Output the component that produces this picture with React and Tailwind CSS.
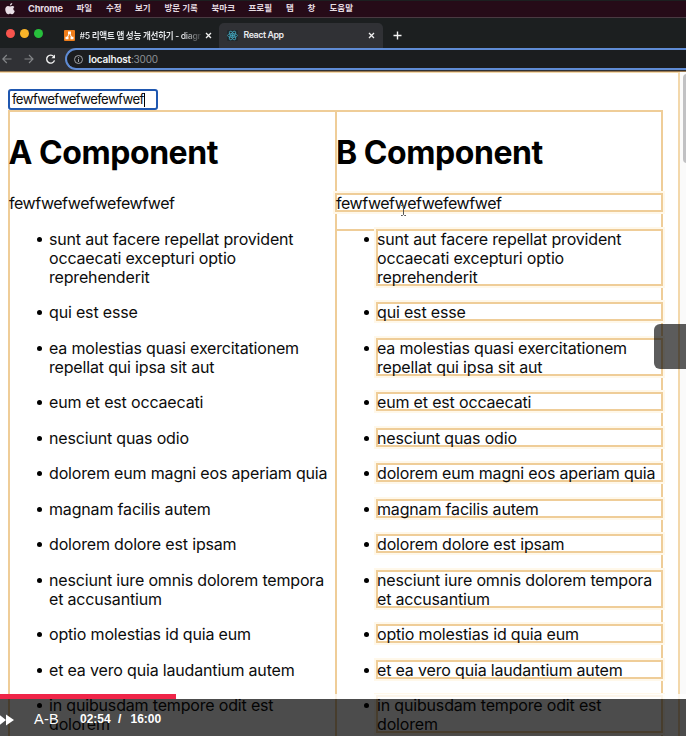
import React from "react";

const posts = [
  ["sunt aut facere repellat provident", "occaecati excepturi optio", "reprehenderit"],
  ["qui est esse"],
  ["ea molestias quasi exercitationem", "repellat qui ipsa sit aut"],
  ["eum et est occaecati"],
  ["nesciunt quas odio"],
  ["dolorem eum magni eos aperiam quia"],
  ["magnam facilis autem"],
  ["dolorem dolore est ipsam"],
  ["nesciunt iure omnis dolorem tempora", "et accusantium"],
  ["optio molestias id quia eum"],
  ["et ea vero quia laudantium autem"],
  ["in quibusdam tempore odit est", "dolorem"],
];

const menus = [
  ["파일", "w-[29.5px]"],
  ["수정", "w-[29px]"],
  ["보기", "w-[29.5px]"],
  ["방문 기록", "w-[47px]"],
  ["북마크", "w-[37px]"],
  ["프로필", "w-[37.5px]"],
  ["탭", "w-[21.5px]"],
  ["창", "w-[22px]"],
  ["도움말", "w-[30px]"],
];

function Apple() {
  return (
    <svg className="h-[12px] w-[10px]" viewBox="0 0 20 24" fill="#e9dfe6">
      <path d="M14.5 0c.2 2.600-2 5-4.500 5C9.700 2.600 12 .3 14.500 0zM18.700 8.200c-3.200 2-2.700 6.500.8 8-.9 3-3 6.300-5.200 6.500-1.600 0-2.200-1-4-1s-2.600 1-4 1C3.300 22.700.5 17 .5 12.700.5 8.500 3.200 6 6 6c1.700 0 3 1.100 4.300 1.100S13 5.900 15 6c1.400 0 2.900.8 3.700 2.200z" />
    </svg>
  );
}

function Close() {
  return (
    <svg className="size-[7px]" viewBox="0 0 7 7" stroke="#f1f1f1" strokeWidth="1.3">
      <path d="M1 1l5 5M6 1L1 6" />
    </svg>
  );
}

function DiagramLogo() {
  return (
    <svg className="size-[11px] shrink-0" viewBox="0 0 11 11">
      <rect width="11" height="11" rx="1" fill="#ef7d1a" />
      <path d="M5.500 3L3 8M5.500 3L8 8" stroke="#fff" />
      <path d="M4 1.500h3v2.500H4zM1.500 6.800h3v2.500h-3zM6.500 6.800h3v2.500h-3z" fill="#fff" />
    </svg>
  );
}

function ReactLogo() {
  return (
    <svg className="size-[11px]" viewBox="0 0 24 24" fill="none" stroke="#43a8c0" strokeWidth="1.600">
      <rect width="24" height="24" rx="3" fill="#20282d" stroke="none" />
      <ellipse cx="12" cy="12" rx="11" ry="4.300" />
      <ellipse cx="12" cy="12" rx="11" ry="4.300" transform="rotate(60 12 12)" />
      <ellipse cx="12" cy="12" rx="11" ry="4.300" transform="rotate(120 12 12)" />
      <circle cx="12" cy="12" r="2" fill="#43a8c0" />
    </svg>
  );
}

function Column({ name, boxed }) {
  const box = boxed ? "shadow-[inset_0_0_0_2px_#efcd98,0_0_0_2px_#fff8ea]" : "";
  return (
    <section
      className={
        "h-[700px] shrink-0 border-t-2 border-l-2 border-[#efcd98] " +
        (boxed ? "w-[328px] border-r-2" : "w-[327px]")
      }
    >
      <h1
        className={
          "mt-[21px] h-[39px] text-[32px] leading-[39px] font-bold tracking-[-0.45px] whitespace-nowrap text-black " +
          (boxed ? "-ml-px" : "-ml-[1.5px]")
        }
      >
        {name} Component
      </h1>
      <p
        className={
          "mt-[21px] -ml-[2px] h-[19px] pl-px leading-[20px] tracking-[-0.46px] " +
          (boxed ? "-mr-[2px] " : "") +
          box
        }
      >
        fewfwefwefwefewfwef
      </p>
      <ul
        className={
          "mt-[16.500px] -ml-[2px] flex flex-col gap-[16.500px] pl-[41px] " +
          (boxed ? "-mr-[2px] shadow-[inset_0_2px_0_#efcd98]" : "")
        }
      >
        {posts.map((lines) => (
          <li
            key={lines[0]}
            className={"relative tracking-[-0.17px] whitespace-nowrap " + (boxed ? "pl-px " : "") + box}
          >
            <span className="absolute top-[8px] -left-[12px] size-[5px] rounded-full bg-black" />
            {lines.map((line) => (
              <span key={line} className="block h-[19px] leading-[20px]">
                {line}
              </span>
            ))}
          </li>
        ))}
      </ul>
    </section>
  );
}

export default function App() {
  return (
    <div className="relative flex h-[736px] w-[686px] flex-col overflow-hidden bg-white font-['Inter','Noto_Sans_CJK_KR',sans-serif] text-[16px] text-[#0c0c0c]">
      <header className="shrink-0 bg-[#1c1f20]">
        <div className="mt-px flex h-[17px] items-center border-b border-[#4a3a42] bg-[#260b18] pb-px pl-[5px] text-[8.500px] text-[#e5dbe1]">
          <Apple />
          <span className="ml-[13px] w-[48.500px] text-[9.200px] font-bold tracking-[-0.1px]">Chrome</span>
          {menus.map(([label, width]) => (
            <span key={label} className={"shrink-0 font-bold whitespace-nowrap " + width}>
              {label}
            </span>
          ))}
        </div>
        <div className="flex h-[30px] items-end text-[8.800px] text-[#e8eaed]">
          <div className="flex h-[25px] w-[219px] items-center pb-px pl-[6px]">
            <div className="-mt-[3px] flex gap-[5.500px]">
              <span className="size-[8.500px] rounded-full bg-[#f8544d]" />
              <span className="size-[8.500px] rounded-full bg-[#f9b429]" />
              <span className="size-[8.500px] rounded-full bg-[#27bf3c]" />
            </div>
            <div className="mt-[2px] ml-[21px] flex items-center">
              <DiagramLogo />
              <span className="ml-[5px] w-[121px] bg-linear-to-r from-[#e8eaed] from-85% to-[#3b3d3e] bg-clip-text text-[8.600px] font-semibold tracking-[-0.3px] whitespace-nowrap text-transparent">
                #5 리액트 앱 성능 개선하기 - diagr
              </span>
              <span className="ml-[4px]">
                <Close />
              </span>
            </div>
          </div>
          <div className="flex h-[25px] w-[164px] items-center rounded-t-[5px] bg-[#303135] pb-px pl-[8px]">
            <ReactLogo />
            <span className="ml-[5.500px] w-[124.500px] font-semibold tracking-[-0.4px]">React App</span>
            <Close />
          </div>
          <svg className="mb-[8px] ml-[10px] size-[9px]" viewBox="0 0 9 9" stroke="#f3f3f3" strokeWidth="1.400">
            <path d="M4.500 .5v8M.5 4.500h8" />
          </svg>
        </div>
        <div className="flex h-[24px] items-start border-b border-[#9a7950] bg-[#303135]">
          <svg className="h-[22px] w-[65px] shrink-0" viewBox="0 0 65 22" fill="none" stroke="#85878a" strokeWidth="1.100">
            <path d="M11.500 11H3M6.800 7L2.800 11l4 4M24.500 11H33M29 7l4 4-4 4" />
            <path d="M53.800 8.600a4 4 0 1 0 .7 3.800" stroke="#f1f1f1" strokeWidth="1.400" />
            <path d="M55 6.600v3.600h-3.600z" fill="#f1f1f1" stroke="none" />
          </svg>
          <div className="flex h-[22px] flex-1 items-center rounded-l-full border-2 border-r-0 border-[#5f8bd4] bg-[#1b1d1f] pt-px pl-[6.500px] text-[10px] tracking-[-0.2px]">
            <svg className="size-[9px]" viewBox="0 0 9 9" fill="none" stroke="#9fa2a6">
              <circle cx="4.500" cy="4.500" r="4" />
              <path d="M4.500 4v3M4.500 2.200v1" />
            </svg>
            <span className="ml-[6px] font-semibold text-[#f1f3f4]">localhost</span>
            <span className="text-[#8d9196]">:3000</span>
          </div>
        </div>
      </header>
      <main className="flex flex-1 overflow-hidden">
        <div className="w-[680px] shrink-0 border-t border-r-2 border-[#f3d8ab] pl-[8px]">
          <div className="mt-[16px] flex h-[21px] w-[150px] items-center rounded-[3px] border-2 border-[#1f57b0] pt-px pl-[2px] text-[13.200px] tracking-[-0.62px]">
            <span>fewfwefwefwefewfwef</span>
            <span className="h-[14px] w-px bg-black" />
          </div>
          <div className="flex">
            <Column name="A" />
            <Column name="B" boxed />
          </div>
        </div>
        <div className="flex-1 bg-[#fafafa] pt-[2px] pl-[3px]">
          <div className="h-[89px] w-[8px] rounded-full bg-[#c1c1c3]" />
        </div>
      </main>
      <svg className="absolute top-[205px] left-[400px] h-[11px] w-[7px]" viewBox="0 0 7 11" fill="none" stroke="#555" strokeWidth="1">
        <path d="M1 .5h1.500l1 1 1-1H6M3.500 1.500v8M1 10.500h1.500l1-1 1 1H6" />
      </svg>
      <div className="absolute top-[324px] left-[654px] h-[45px] w-[40px] rounded-[6px] bg-black/64" />
      <div className="absolute bottom-0 left-0 w-full">
        <div className="h-[5px] bg-white/80">
          <div className="h-[5px] w-[176px] bg-[#ef2548]" />
        </div>
        <div className="flex h-[37px] items-center bg-black/70 font-['Liberation_Sans',Arial,sans-serif] text-white">
          <svg className="mt-[4px] h-[12px] w-[14px]" viewBox="0 0 14 12" fill="#fff">
            <path d="M-1 .5L6 6l-7 5.500zM6 .5L14 6l-8 5.500z" />
          </svg>
          <span className="mt-[4px] ml-[20px] w-[46px] text-[14.500px] tracking-[0.3px]">A-B</span>
          <span className="mt-[3px] flex text-[12px] font-bold">
            <span className="w-[38px]">02:54</span>
            <span className="w-[12.500px]">/</span>
            <span>16:00</span>
          </span>
        </div>
      </div>
    </div>
  );
}
